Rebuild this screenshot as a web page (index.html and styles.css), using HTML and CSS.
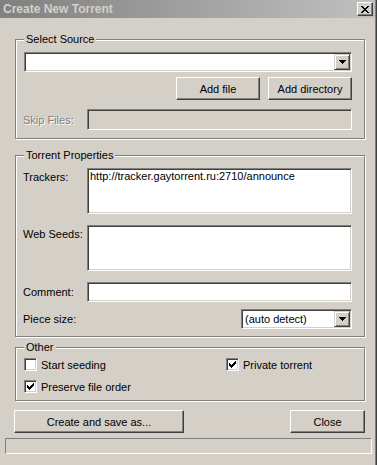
FILE: index.html
```
<!DOCTYPE html>
<html lang="en">
<head>
    <meta charset="UTF-8">
    <meta name="viewport" content="width=device-width, initial-scale=1.0">
    <title>Create New Torrent</title>
    <link rel="stylesheet" href="styles.css">
</head>
<body>
    <div class="window">
        <div class="titlebar">
            <span class="title">Create New Torrent</span>
            <span class="close-btn">
                <svg width="8" height="7" viewBox="0 0 8 7" shape-rendering="crispEdges">
                    <rect x="0" y="0" width="2" height="1"/><rect x="6" y="0" width="2" height="1"/>
                    <rect x="1" y="1" width="2" height="1"/><rect x="5" y="1" width="2" height="1"/>
                    <rect x="2" y="2" width="4" height="1"/>
                    <rect x="3" y="3" width="2" height="1"/>
                    <rect x="2" y="4" width="4" height="1"/>
                    <rect x="1" y="5" width="2" height="1"/><rect x="5" y="5" width="2" height="1"/>
                    <rect x="0" y="6" width="2" height="1"/><rect x="6" y="6" width="2" height="1"/>
                </svg>
            </span>
        </div>

        <div class="content">
            <fieldset class="group source">
                <legend>Select Source</legend>
                <div class="combo">
                    <span class="combo-value"></span>
                    <span class="combo-arrow">
                        <svg width="7" height="4" viewBox="0 0 7 4" shape-rendering="crispEdges">
                            <rect x="0" y="0" width="7" height="1"/><rect x="1" y="1" width="5" height="1"/>
                            <rect x="2" y="2" width="3" height="1"/><rect x="3" y="3" width="1" height="1"/>
                        </svg>
                    </span>
                </div>
                <div class="source-buttons">
                    <button class="btn btn-add">Add file</button>
                    <button class="btn btn-add">Add directory</button>
                </div>
                <div class="field-row skip-row">
                    <label class="field-label disabled">Skip Files:</label>
                    <input class="edit" type="text" disabled>
                </div>
            </fieldset>

            <fieldset class="group props">
                <legend>Torrent Properties</legend>
                <div class="field-row top">
                    <label class="field-label">Trackers:</label>
                    <textarea class="edit multi">http://tracker.gaytorrent.ru:2710/announce</textarea>
                </div>
                <div class="field-row top seeds-row">
                    <label class="field-label">Web Seeds:</label>
                    <textarea class="edit multi"></textarea>
                </div>
                <div class="field-row comment-row">
                    <label class="field-label">Comment:</label>
                    <input class="edit" type="text">
                </div>
                <div class="field-row piece-row">
                    <label class="field-label">Piece size:</label>
                    <div class="combo piece">
                        <span class="combo-value">(auto detect)</span>
                        <span class="combo-arrow">
                            <svg width="7" height="4" viewBox="0 0 7 4" shape-rendering="crispEdges">
                                <rect x="0" y="0" width="7" height="1"/><rect x="1" y="1" width="5" height="1"/>
                                <rect x="2" y="2" width="3" height="1"/><rect x="3" y="3" width="1" height="1"/>
                            </svg>
                        </span>
                    </div>
                </div>
            </fieldset>

            <fieldset class="group other">
                <legend>Other</legend>
                <div class="checks">
                    <label class="check"><span class="box"></span>Start seeding</label>
                    <label class="check"><span class="box"><svg class="tick" width="7" height="7" viewBox="0 0 7 7" shape-rendering="crispEdges"><rect x="0" y="2" width="1" height="3"/><rect x="1" y="3" width="1" height="3"/><rect x="2" y="4" width="1" height="3"/><rect x="3" y="3" width="1" height="3"/><rect x="4" y="2" width="1" height="3"/><rect x="5" y="1" width="1" height="3"/><rect x="6" y="0" width="1" height="3"/></svg></span>Private torrent</label>
                    <label class="check"><span class="box"><svg class="tick" width="7" height="7" viewBox="0 0 7 7" shape-rendering="crispEdges"><rect x="0" y="2" width="1" height="3"/><rect x="1" y="3" width="1" height="3"/><rect x="2" y="4" width="1" height="3"/><rect x="3" y="3" width="1" height="3"/><rect x="4" y="2" width="1" height="3"/><rect x="5" y="1" width="1" height="3"/><rect x="6" y="0" width="1" height="3"/></svg></span>Preserve file order</label>
                </div>
            </fieldset>

            <div class="actions">
                <button class="btn btn-create">Create and save as...</button>
                <button class="btn btn-close">Close</button>
            </div>
        </div>

        <div class="statusbar"></div>
    </div>
</body>
</html>
```

FILE: styles.css
```
body {
    margin: 0;
    background: #d4d0c8;
    font: 11px "Liberation Sans", Arial, sans-serif;
    color: #000;
}
.window {
    width: 377px;
    height: 465px;
    box-sizing: border-box;
    box-shadow: inset -1px 0 #404040, inset -2px 0 #808080;
    overflow: hidden;
}
.titlebar {
    height: 18px;
    margin-right: 2px;
    padding: 0 2px 0 3px;
    background: linear-gradient(to right, #808080, #c0c0c0);
    display: flex;
    align-items: center;
    justify-content: space-between;
}
.title {
    color: #d4d0c8;
    font-size: 12px;
    font-weight: bold;
}
.close-btn {
    width: 16px;
    height: 14px;
    box-sizing: border-box;
    background: #d4d0c8;
    border: 1px solid;
    border-color: #fff #404040 #404040 #fff;
    box-shadow: inset -1px -1px #808080;
    display: flex;
    align-items: center;
    justify-content: center;
}
.content {
    padding: 15px 12px 0 15px;
}
.group {
    margin: 0;
    padding: 6px 12px 8px 7px;
    min-width: 0;
    border: 1px solid #808080;
    box-shadow: inset 1px 1px #fff, 1px 1px #fff;
}
.group legend {
    margin-left: 1px;
    padding: 0 2px;
    line-height: 13px;
    background: #d4d0c8;
}
.props {
    margin-top: 10px;
    padding-bottom: 7px;
}
.other {
    margin-top: 4px;
    padding: 2px 12px 5px 7px;
}

/* sunken controls */
.combo, .edit, .box {
    box-sizing: border-box;
    background: #fff;
    border: 1px solid;
    border-color: #808080 #fff #fff #808080;
    box-shadow: inset 1px 1px #404040, inset -1px -1px #d4d0c8;
}
.combo {
    display: flex;
    height: 20px;
    padding: 1px;
}
.source .combo {
    margin-left: 1px;
}
.combo-value {
    flex: 1;
    padding-left: 2px;
    line-height: 16px;
}
.combo-arrow {
    width: 16px;
    box-sizing: border-box;
    background: #d4d0c8;
    border: 1px solid;
    border-color: #d4d0c8 #404040 #404040 #d4d0c8;
    box-shadow: inset 1px 1px #fff, inset -1px -1px #808080;
    display: flex;
    align-items: center;
    justify-content: center;
}
.edit {
    flex: 1;
    min-width: 0;
    height: 20px;
    margin: 0;
    padding: 1px 2px;
    font: inherit;
    color: #000;
    outline: none;
}
.edit:disabled {
    background: #d4d0c8;
}
.edit.multi {
    height: 46px;
    resize: none;
    overflow: hidden;
    line-height: 13px;
}

/* raised buttons */
.btn {
    height: 23px;
    box-sizing: border-box;
    padding: 0;
    background: #d4d0c8;
    border: 1px solid;
    border-color: #fff #404040 #404040 #fff;
    box-shadow: inset -1px -1px #808080;
    font: inherit;
    color: #000;
}
.source-buttons {
    display: flex;
    justify-content: flex-end;
    gap: 8px;
    margin-top: 5px;
}
.btn-add {
    width: 84px;
}

.field-row {
    display: flex;
    align-items: center;
}
.field-row.top {
    align-items: flex-start;
}
.field-label {
    width: 64px;
    flex: none;
}
.field-row.top .field-label {
    padding-top: 3px;
}
.field-label.disabled {
    color: #808080;
    text-shadow: 1px 1px 0 #fff;
}
.skip-row {
    margin-top: 9px;
}
.skip-row .edit {
    height: 21px;
}
.seeds-row {
    margin-top: 11px;
}
.comment-row {
    margin-top: 11px;
}
.piece-row {
    margin-top: 7px;
}
.combo.piece {
    margin-left: auto;
    width: 111px;
}

.checks {
    display: grid;
    grid-template-columns: 202px 1fr;
    row-gap: 5px;
}
.check {
    display: flex;
    align-items: center;
    height: 17px;
}
.box {
    width: 13px;
    height: 13px;
    margin: 0 4px 0 1px;
    display: flex;
    align-items: center;
    justify-content: center;
}

.actions {
    display: flex;
    justify-content: space-between;
    margin: 9px 0 0 -1px;
}
.btn-create {
    width: 170px;
}
.btn-close {
    width: 75px;
}
.statusbar {
    height: 16px;
    margin: 5px 5px 0 5px;
    box-sizing: border-box;
    border: 1px solid;
    border-color: #808080 #fff #fff #808080;
}
```
